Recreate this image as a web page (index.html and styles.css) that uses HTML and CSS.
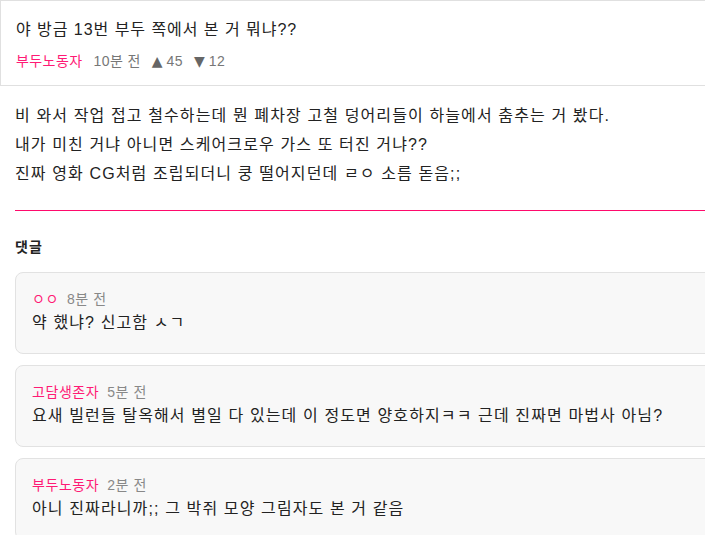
FILE: index.html
```html
<!DOCTYPE html>
<html lang="ko">
<head>
<meta charset="utf-8">
<link rel="stylesheet" href="styles.css">
</head>
<body>
<div class="page">
  <header class="post-head">
    <h1 class="title">야 방금 13번 부두 쪽에서 본 거 뭐냐??</h1>
    <div class="meta">
      <span class="author">부두노동자</span>
      <span>10분 전</span>
      <span class="vote"><span class="tri">▲</span>45</span>
      <span class="vote"><span class="tri">▼</span>12</span>
    </div>
  </header>
  <section class="post-body">
    <p class="content">비 와서 작업 접고 철수하는데 뭔 폐차장 고철 덩어리들이 하늘에서 춤추는 거 봤다.<br>내가 미친 거냐 아니면 스케어크로우 가스 또 터진 거냐??<br>진짜 영화 CG처럼 조립되더니 쿵 떨어지던데 ㄹㅇ 소름 돋음;;</p>
    <div class="divider"></div>
    <h2 class="comments-title">댓글</h2>
    <div class="comments">
      <div class="comment">
        <div class="c-meta"><span class="author">ㅇㅇ</span><span>8분 전</span></div>
        <div class="c-text">약 했냐? 신고함 ㅅㄱ</div>
      </div>
      <div class="comment">
        <div class="c-meta"><span class="author">고담생존자</span><span>5분 전</span></div>
        <div class="c-text">요새 빌런들 탈옥해서 별일 다 있는데 이 정도면 양호하지ㅋㅋ 근데 진짜면 마법사 아님?</div>
      </div>
      <div class="comment">
        <div class="c-meta"><span class="author">부두노동자</span><span>2분 전</span></div>
        <div class="c-text">아니 진짜라니까;; 그 박쥐 모양 그림자도 본 거 같음</div>
      </div>
    </div>
  </section>
</div>
</body>
</html>
```
FILE: styles.css
```css
html {
  overflow: hidden;
}
body {
  margin: 0;
  background: #fff;
  color: #222;
  font-family: "Liberation Sans", "Noto Sans CJK KR", sans-serif;
  letter-spacing: 0.07em;
}
.page {
  width: 760px;
}
.post-head {
  height: 86px;
  box-sizing: border-box;
  border: 1px solid #e0e0e0;
  border-right: none;
  padding: 16px 15px 0;
}
.title {
  margin: 0;
  font-size: 16px;
  font-weight: normal;
  line-height: 26px;
  letter-spacing: 0.06em;
  color: #222;
}
.meta {
  display: flex;
  gap: 11px;
  margin-top: 8px;
  height: 20px;
  font-size: 14px;
  line-height: 20px;
  letter-spacing: 0.03em;
  color: #777;
}
.vote {
  display: flex;
  gap: 4px;
  height: 20px;
}
.tri {
  font-family: "DejaVu Sans", sans-serif;
  font-size: 14px;
  line-height: 20px;
  color: #666;
  letter-spacing: 0;
}
.author {
  color: #ff1a75;
}
.post-body {
  padding: 15px 0 0 15px;
}
.content {
  margin: 0;
  padding-bottom: 22px;
  font-size: 16px;
  line-height: 29px;
  color: #222;
}
.divider {
  height: 1px;
  background: #ff0a6c;
}
.comments-title {
  margin: 26px 0 15px;
  font-size: 14px;
  font-weight: bold;
  line-height: 20px;
  color: #222;
}
.comments {
  display: flex;
  flex-direction: column;
  gap: 11px;
}
.comment {
  background: #f8f8f8;
  border: 1px solid #e2e2e2;
  border-radius: 8px;
  padding: 16px 16px 18px;
}
.c-meta {
  display: flex;
  gap: 8px;
  font-size: 14px;
  line-height: 20px;
  letter-spacing: 0.04em;
  color: #888;
}
.c-text {
  margin-top: 2px;
  font-size: 16px;
  line-height: 24px;
  color: #222;
}
```
